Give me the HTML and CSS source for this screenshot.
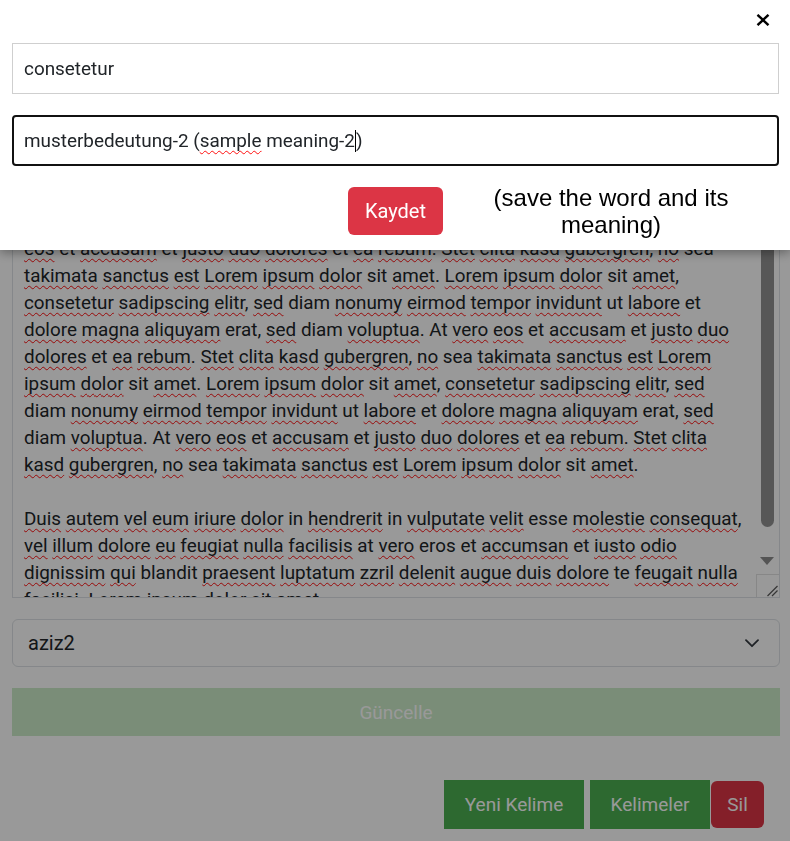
FILE: index.html
```html
<!DOCTYPE html>
<html lang="tr">
<head>
<meta charset="utf-8">
<title>Kelime</title>
<link rel="stylesheet" href="styles.css">
</head>
<body>
<div class="page">
  <div class="ta">
    <div class="ta-text">
      <div class="ln"><u>Lorem</u> <u>ipsum</u> <u>dolor</u> sit <u>amet</u>, <u>consetetur</u> <u>sadipscing</u> <u>elitr</u>, <u>sed</u> diam <u>nonumy</u> <u>eirmod</u></div>
      <div class="ln"><u>tempor</u> <u>invidunt</u> ut <u>labore</u> et <u>dolore</u> <u>magna</u> <u>aliquyam</u> erat, <u>sed</u> diam <u>voluptua</u>. At <u>vero</u></div>
      <div class="ln"><u>eos</u> et <u>accusam</u> et <u>justo</u> <u>duo</u> <u>dolores</u> et <u>ea</u> <u>rebum</u>. <u>Stet</u> <u>clita</u> <u>kasd</u> <u>gubergren</u>, <u>no</u> sea</div>
      <div class="ln"><u>takimata</u> <u>sanctus</u> <u>est</u> <u>Lorem</u> <u>ipsum</u> <u>dolor</u> sit <u>amet</u>. <u>Lorem</u> <u>ipsum</u> <u>dolor</u> sit <u>amet</u>,</div>
      <div class="ln"><u>consetetur</u> <u>sadipscing</u> <u>elitr</u>, <u>sed</u> diam <u>nonumy</u> <u>eirmod</u> <u>tempor</u> <u>invidunt</u> ut <u>labore</u> et</div>
      <div class="ln"><u>dolore</u> <u>magna</u> <u>aliquyam</u> erat, <u>sed</u> diam <u>voluptua</u>. At <u>vero</u> <u>eos</u> et <u>accusam</u> et <u>justo</u> <u>duo</u></div>
      <div class="ln"><u>dolores</u> et <u>ea</u> <u>rebum</u>. <u>Stet</u> <u>clita</u> <u>kasd</u> <u>gubergren</u>, <u>no</u> sea <u>takimata</u> <u>sanctus</u> <u>est</u> <u>Lorem</u></div>
      <div class="ln"><u>ipsum</u> <u>dolor</u> sit <u>amet</u>. <u>Lorem</u> <u>ipsum</u> <u>dolor</u> sit <u>amet</u>, <u>consetetur</u> <u>sadipscing</u> <u>elitr</u>, <u>sed</u></div>
      <div class="ln">diam <u>nonumy</u> <u>eirmod</u> <u>tempor</u> <u>invidunt</u> ut <u>labore</u> et <u>dolore</u> <u>magna</u> <u>aliquyam</u> erat, <u>sed</u></div>
      <div class="ln">diam <u>voluptua</u>. At <u>vero</u> <u>eos</u> et <u>accusam</u> et <u>justo</u> <u>duo</u> <u>dolores</u> et <u>ea</u> <u>rebum</u>. <u>Stet</u> <u>clita</u></div>
      <div class="ln"><u>kasd</u> <u>gubergren</u>, <u>no</u> sea <u>takimata</u> <u>sanctus</u> <u>est</u> <u>Lorem</u> <u>ipsum</u> <u>dolor</u> sit <u>amet</u>.</div>
      <div class="ln">&nbsp;</div>
      <div class="ln"><u>Duis</u> <u>autem</u> <u>vel</u> <u>eum</u> <u>iriure</u> <u>dolor</u> in <u>hendrerit</u> in <u>vulputate</u> <u>velit</u> esse <u>molestie</u> <u>consequat</u>,</div>
      <div class="ln"><u>vel</u> <u>illum</u> <u>dolore</u> <u>eu</u> <u>feugiat</u> <u>nulla</u> <u>facilisis</u> at <u>vero</u> eros et <u>accumsan</u> et <u>iusto</u> <u>odio</u></div>
      <div class="ln"><u>dignissim</u> <u>qui</u> blandit <u>praesent</u> <u>luptatum</u> <u>zzril</u> <u>delenit</u> <u>augue</u> <u>duis</u> <u>dolore</u> te <u>feugait</u> <u>nulla</u></div>
      <div class="ln"><u>facilisi</u>. <u>Lorem</u> <u>ipsum</u> <u>dolor</u> sit <u>amet</u>,</div>
    </div>
    <div class="sb">
      <div class="thumb"></div>
      <div class="arrow"></div>
      <div class="grip">
        <svg width="22" height="22" viewBox="0 0 22 22"><line x1="10.5" y1="21" x2="20.5" y2="11" stroke="#5a5a5a" stroke-width="1.3"/><line x1="15" y1="21" x2="20.5" y2="15.5" stroke="#5a5a5a" stroke-width="1.3"/></svg>
      </div>
    </div>
  </div>

  <div class="sel">
    <span>aziz2</span>
    <svg width="14" height="9" viewBox="0 0 14 9"><polyline points="1,1.2 7,7.2 13,1.2" fill="none" stroke="#343a40" stroke-width="1.8" stroke-linecap="round" stroke-linejoin="round"/></svg>
  </div>

  <div class="upd">Güncelle</div>

  <div class="actions">
    <div class="btn-g">Yeni Kelime</div>
    <div class="btn-g btn-gap">Kelimeler</div>
    <div class="btn-del">Sil</div>
  </div>
</div>

<div class="backdrop"></div>

<div class="modal">
  <div class="m-head">
    <svg class="close" width="14" height="12" viewBox="0 0 14 12"><line x1="1.5" y1="0.8" x2="12.5" y2="11.2" stroke="#000" stroke-width="2.4"/><line x1="12.5" y1="0.8" x2="1.5" y2="11.2" stroke="#000" stroke-width="2.4"/></svg>
  </div>
  <div class="inp1">consetetur</div>
  <div class="inp2">musterbedeutung-2 (<u>sample</u> meaning-2<span class="caret"></span>)</div>
  <div class="m-row">
    <div class="btn-save">Kaydet</div>
    <div class="note">(save the word and its meaning)</div>
  </div>
</div>
</body>
</html>
```
FILE: styles.css
```css
body {
  margin: 0;
  background: #fff;
  font-family: Roboto, "Noto Sans", sans-serif;
  color: #212529;
}

.page {
  width: 768px;
  margin-left: 12px;
  padding-top: 170px;
}

.ta {
  height: 428px;
  box-sizing: border-box;
  border: 1px solid #dee2e6;
  display: flex;
}

.ta-text {
  flex: 1;
  padding: 11px 11px 10px;
  overflow: hidden;
  font-size: 18.85px;
  line-height: 27px;
}

.ln {
  white-space: nowrap;
}

.ta-text u,
.inp2 u {
  text-decoration: underline wavy #ff1010;
  text-decoration-thickness: 1px;
  text-underline-offset: 3px;
  text-decoration-skip-ink: none;
}

.sb {
  width: 23px;
  display: flex;
  flex-direction: column;
}

.thumb {
  margin: 4px 0 0 5px;
  width: 13px;
  height: 352px;
  background: #929292;
  border-radius: 7px;
}

.arrow {
  margin: 30px 0 0 4px;
  width: 0;
  height: 0;
  border-left: 7.5px solid transparent;
  border-right: 7.5px solid transparent;
  border-top: 8px solid #8c8c8c;
}

.grip {
  margin-top: 9px;
  height: 23px;
  box-sizing: border-box;
  border-top: 1px solid #e2e2e2;
  border-left: 1px solid #e2e2e2;
}

.grip svg {
  display: block;
}

.sel {
  margin-top: 21px;
  height: 48px;
  box-sizing: border-box;
  border: 1px solid #dee2e6;
  border-radius: 6px;
  display: flex;
  align-items: center;
  justify-content: space-between;
  padding: 0 20px 0 15px;
  font-size: 20px;
}

.upd {
  margin-top: 21px;
  height: 48px;
  background: #cbebc8;
  color: #fff;
  display: flex;
  align-items: center;
  justify-content: center;
  font-size: 19px;
}

.actions {
  margin-top: 44px;
  display: flex;
  justify-content: flex-end;
  align-items: center;
  padding-right: 16px;
}

.btn-g {
  height: 49px;
  width: 140px;
  background: #4caf50;
  color: #fff;
  font-size: 19px;
  display: flex;
  align-items: center;
  justify-content: center;
}

.btn-gap {
  width: 120px;
  margin-left: 6px;
}

.btn-del {
  margin-left: 1px;
  height: 47px;
  width: 53px;
  border-radius: 6px;
  background: #dc3545;
  color: #fff;
  font-size: 19px;
  display: flex;
  align-items: center;
  justify-content: center;
}

.backdrop {
  position: fixed;
  inset: 0;
  background: rgba(0, 0, 0, 0.4);
  z-index: 1;
}

.modal {
  position: fixed;
  top: 0;
  left: 0;
  right: 0;
  z-index: 2;
  background: #fff;
  padding: 0 11px 15px 12px;
  box-shadow: 0 3px 10px rgba(0, 0, 0, 0.35);
}

.m-head {
  height: 40px;
  display: flex;
  justify-content: flex-end;
  align-items: center;
  padding-right: 9px;
}

.close {
  display: block;
}

.inp1 {
  margin-top: 3px;
  height: 51px;
  box-sizing: border-box;
  border: 1px solid #cfcfcf;
  display: flex;
  align-items: center;
  padding-left: 11px;
  font-size: 18.9px;
}

.inp2 {
  margin-top: 21px;
  height: 51px;
  box-sizing: border-box;
  border: 2px solid #111;
  border-radius: 4px;
  display: flex;
  align-items: center;
  padding-left: 10px;
  font-size: 18.9px;
  white-space: pre;
}

.caret {
  display: inline-block;
  width: 1px;
  height: 22px;
  background: #000;
}

.m-row {
  margin-top: 21px;
  height: 48px;
  display: flex;
  justify-content: flex-end;
  align-items: center;
}

.btn-save {
  height: 48px;
  width: 95px;
  border-radius: 6px;
  background: #dc3545;
  color: #fff;
  font-size: 20px;
  display: flex;
  align-items: center;
  justify-content: center;
}

.note {
  width: 336px;
  text-align: center;
  font-family: "Liberation Sans", Arial, sans-serif;
  font-size: 24px;
  line-height: 27px;
  color: #000;
}
```
